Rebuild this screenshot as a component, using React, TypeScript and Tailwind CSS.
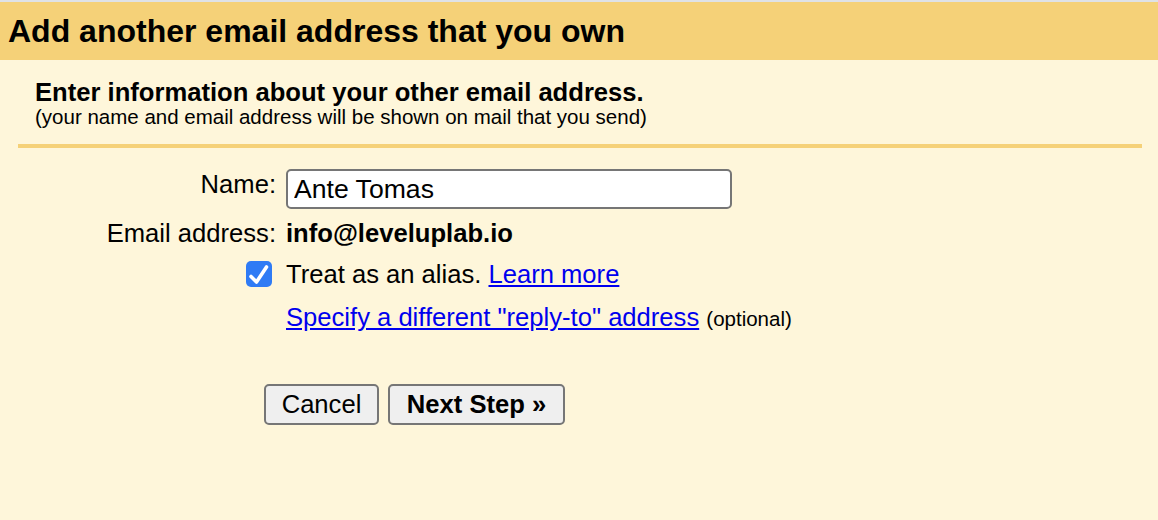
import React, { useState } from 'react';

const FONT = { fontFamily: '"Liberation Sans", Arial, Helvetica, sans-serif' };

const BUTTON_CLASS = "h-[41px] rounded-[5px] border-2 border-[#767676] bg-[#efefef] px-[15px] text-[25.6px] leading-none text-black";

export default function App() {
    const [name, setName] = useState('Ante Tomas');
    const [alias, setAlias] = useState(true);

    return (
        <div className="min-h-[520px] w-full bg-[#fef6da] text-black" style={FONT}>
            <div className="h-[2px] bg-[#dfe2e6]" />
            <div className="flex h-[58px] items-center bg-[#f5d178] pl-[8px]">
                <h1 className="text-[32px] font-bold leading-none">Add another email address that you own</h1>
            </div>

            <div className="pl-[35px] pt-[18px]">
                <p className="text-[25.6px] font-bold leading-[28px]">Enter information about your other email address.</p>
                <p className="text-[20.5px] leading-[22px]">(your name and email address will be shown on mail that you send)</p>
            </div>
            <div className="ml-[18px] mr-[16px] mt-[16px] h-[4px] bg-[#f5d178]" />

            <div className="grid grid-cols-[276px_1fr] gap-x-[10px] pt-[21px] text-[25.6px]">
                <label htmlFor="name" className="text-right leading-[30px]">Name:</label>
                <input
                    id="name"
                    type="text"
                    value={name}
                    onChange={(e) => setName(e.target.value)}
                    className="h-[40px] w-[446px] rounded-[5px] border-2 border-[#767676] bg-white px-[6px] text-[26.6px] outline-none"
                />

                <div className="mt-[9px] text-right leading-[30px]">Email address:</div>
                <div className="mt-[9px] font-bold leading-[30px]">info@leveluplab.io</div>

                <div className="mt-[11px] flex h-[30px] items-center justify-end pr-[4px]">
                    <button
                        type="button"
                        onClick={() => setAlias(!alias)}
                        className={"flex h-[26px] w-[26px] items-center justify-center rounded-[5px] " + (alias ? "bg-[#2f7bf5]" : "border-2 border-[#767676] bg-white")}
                    >
                        {alias && (
                            <svg width="26" height="26" viewBox="0 0 26 26" fill="none">
                                <path d="M5 15.5 L10.5 21 L20.5 6" stroke="white" strokeWidth="3.6" strokeLinecap="round" strokeLinejoin="round" />
                            </svg>
                        )}
                    </button>
                </div>
                <div className="mt-[11px] leading-[30px]">
                    Treat as an alias. <a href="#" className="text-[#0000ee] underline">Learn more</a>
                </div>

                <div />
                <div className="mt-[13px] leading-[30px]">
                    <a href="#" className="text-[#0000ee] underline">Specify a different "reply-to" address</a>{' '}
                    <span className="text-[20.5px]">(optional)</span>
                </div>
            </div>

            <div className="ml-[264px] mt-[50px] flex gap-[9px]">
                <button type="button" className={BUTTON_CLASS + " w-[115px]"}>Cancel</button>
                <button type="button" className={BUTTON_CLASS + " w-[177px] font-bold"}>Next Step »</button>
            </div>
        </div>
    );
}
